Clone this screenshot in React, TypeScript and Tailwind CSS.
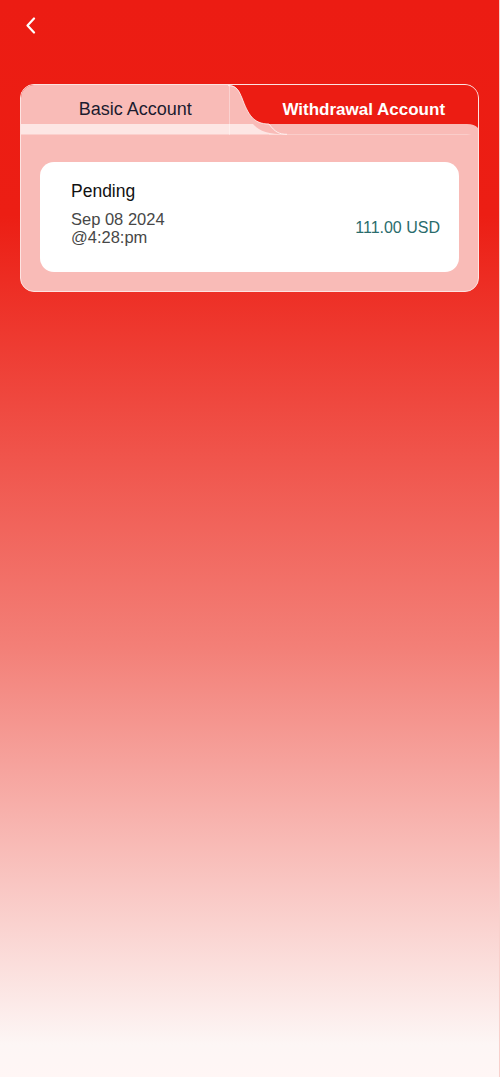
import React from "react";

export default function App() {
  return (
    <div className="w-[500px] bg-[#e4e9f2]" style={{ fontFamily: '"Liberation Sans", Arial, sans-serif' }}>
      <div className="h-[1077px] w-[500px] border-r border-[#f8d0cc] bg-[linear-gradient(180deg,#ec1c13_0%,#ec1e14_20%,#f37f77_60%,#fdf6f5_97%,#fff6f5_100%)]">
        <div className="flex h-[84px] items-start px-[25px] pt-[17px]">
          <svg width="12" height="18" viewBox="0 0 12 18" fill="none">
            <polyline points="9,1.5 2.5,8.5 9,15.5" stroke="white" strokeWidth="2.2" strokeLinecap="round" strokeLinejoin="round" />
          </svg>
        </div>
        <div className="mx-[20px] overflow-hidden rounded-[14px] border border-[#fde3e1] bg-[#f9bbb7]">
          <div className="relative h-[50px]">
            <svg className="absolute inset-0" width="460" height="50" viewBox="0 0 460 50" preserveAspectRatio="none">
              <rect x="0" y="0" width="460" height="50" fill="#ec1c13" />
              <path d="M0,0 L207,0 C216,0 218,6 221,13 C227,29 232,39 248,39 L446,39 Q460,39 460,53 L460,60 L0,60 Z" fill="#f9bbb7" />
              <path d="M0,39 L232,39 C238,46 246,49.5 266,49.5 L0,49.5 Z" fill="#fde6e4" />
              <path d="M207,0.6 C216,0.6 218,6 221,13 C227,29 232,39 248,39 C254,47 258,49.3 266,49.3" stroke="#fff" strokeOpacity="0.75" strokeWidth="1" fill="none" />
              <path d="M248,50 L446,50 Q459,50 459.5,60" stroke="#fff" strokeOpacity="0.55" strokeWidth="1" fill="none" />
              <line x1="208.5" y1="0" x2="208.5" y2="50" stroke="#fff" strokeOpacity="0.35" strokeWidth="1" />
            </svg>
            <div className="relative flex h-[49px] items-center">
              <div className="flex w-[230px] justify-center text-[18px] text-[#1b1b2f]">Basic Account</div>
              <div className="flex w-[230px] justify-center text-[17px] font-bold text-white">Withdrawal Account</div>
            </div>
          </div>
          <div className="px-[19px] pb-[19px] pt-[27px]">
            <div className="rounded-[14px] bg-white pb-[26px] pl-[31px] pr-[19px] pt-[19px]">
              <div className="text-[17.5px] leading-[21px] text-[#111]">Pending</div>
              <div className="mt-[8px] flex items-center justify-between">
                <div className="text-[16.5px] leading-[18px] text-[#474747]">
                  <div>Sep 08 2024</div>
                  <div>@4:28:pm</div>
                </div>
                <div className="text-[16px] text-[#2a6c6c]">111.00 USD</div>
              </div>
            </div>
          </div>
        </div>
      </div>
    </div>
  );
}
